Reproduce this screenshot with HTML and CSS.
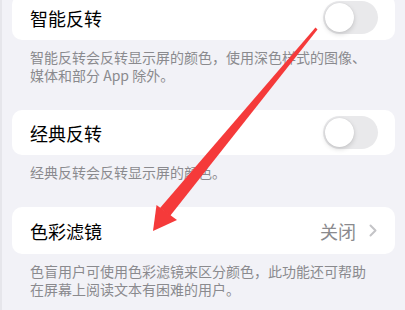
FILE: index.html
```html
<!DOCTYPE html>
<html lang="zh">
<head>
<meta charset="utf-8">
<link rel="stylesheet" href="styles.css">
</head>
<body>
<div class="page">
  <section class="group first">
    <div class="card">
      <span class="title">智能反转</span>
      <span class="toggle"><span class="knob"></span></span>
    </div>
    <p class="desc">智能反转会反转显示屏的颜色，使用深色样式的图像、媒体和部分 App 除外。</p>
  </section>
  <section class="group">
    <div class="card">
      <span class="title">经典反转</span>
      <span class="toggle"><span class="knob"></span></span>
    </div>
    <p class="desc">经典反转会反转显示屏的颜色。</p>
  </section>
  <section class="group">
    <div class="card tall">
      <span class="title">色彩滤镜</span>
      <span class="value">关闭
        <svg class="chev" width="8" height="13" viewBox="0 0 8 13"><path d="M1.5 1.5 L6.5 6.5 L1.5 11.5" fill="none" stroke="#c4c4c7" stroke-width="2" stroke-linecap="round" stroke-linejoin="round"/></svg>
      </span>
    </div>
    <p class="desc">色盲用户可使用色彩滤镜来区分颜色，此功能还可帮助在屏幕上阅读文本有困难的用户。</p>
  </section>
  <svg class="arrow" width="405" height="310" viewBox="0 0 405 310">
    <polygon fill="#f53a3a" points="315.5,27.5 317.5,29.5 170,216 160,208"/>
    <polygon fill="#f53a3a" points="153,231 156.5,205 177,220"/>
  </svg>
</div>
</body>
</html>
```
FILE: styles.css
```css
html, body {
  margin: 0;
  padding: 0;
}
body {
  background: #f2f2f7;
  font-family: "Noto Sans CJK SC", "Noto Sans", sans-serif;
  overflow: hidden;
}
.page {
  position: relative;
  width: 403px;
  height: 310px;
  border-left: 2px solid #e6e6eb;
  background: #f2f2f7;
  overflow: hidden;
}
.group {
  margin: 0 0 26px;
}
.group.first {
  margin-top: -5px;
}
.card {
  margin: 0 10px;
  height: 45px;
  background: #ffffff;
  border-radius: 10px;
  display: flex;
  align-items: center;
  justify-content: space-between;
  padding: 0 17px 0 18px;
}
.card.tall {
  height: 47px;
}
.title {
  font-size: 18px;
  color: #000;
  line-height: 22px;
}
.toggle {
  width: 55px;
  height: 33px;
  border-radius: 17px;
  background: #e9e9eb;
  display: flex;
  align-items: center;
  padding: 0 2px;
  box-sizing: border-box;
}
.knob {
  width: 29px;
  height: 29px;
  border-radius: 50%;
  background: #fff;
  box-shadow: 0 2px 5px rgba(0,0,0,0.16), 0 0 1px rgba(0,0,0,0.12);
}
.value {
  display: flex;
  align-items: center;
  gap: 13px;
  font-size: 18px;
  color: #8a8a8e;
  line-height: 22px;
  padding-right: 1px;
}
.chev {
  display: block;
}
.desc {
  margin: 8px 0 0;
  padding: 0 30px 0 28px;
  font-size: 14px;
  line-height: 18px;
  color: #8a8a8e;
}
.arrow {
  position: absolute;
  left: -2px;
  top: 0;
}
```
